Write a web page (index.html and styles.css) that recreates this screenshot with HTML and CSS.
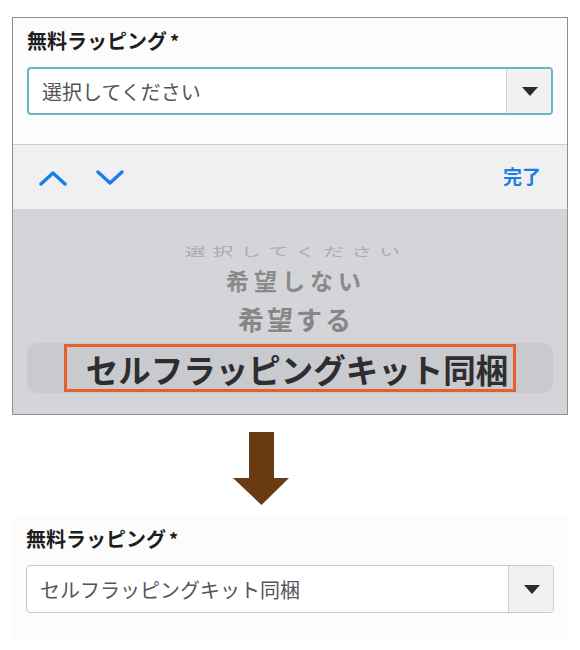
FILE: index.html
```html
<!DOCTYPE html>
<html lang="ja">
<head>
  <meta charset="UTF-8">
  <meta name="viewport" content="width=device-width, initial-scale=1.0">
  <title>無料ラッピング</title>
  <link rel="stylesheet" href="styles.css">
</head>
<body>
  <div class="phone">
    <div class="field">
      <div class="field-label">無料ラッピング<span class="req">*</span></div>
      <div class="select active">
        <span class="select-text">選択してください</span>
        <span class="select-btn"><span class="caret"></span></span>
      </div>
    </div>

    <div class="toolbar">
      <div class="nav">
        <svg class="chev" width="28" height="16" viewBox="0 0 28 16"><path d="M2 14 L14 3 L26 14" fill="none" stroke="#1a7ee6" stroke-width="3.4" stroke-linecap="round" stroke-linejoin="round"/></svg>
        <svg class="chev" width="28" height="16" viewBox="0 0 28 16"><path d="M2 2 L14 13 L26 2" fill="none" stroke="#1a7ee6" stroke-width="3.4" stroke-linecap="round" stroke-linejoin="round"/></svg>
      </div>
      <div class="done">完了</div>
    </div>

    <div class="picker">
      <div class="opt opt-far">選択してください</div>
      <div class="opt opt-mid">希望しない</div>
      <div class="opt opt-near">希望する</div>
      <div class="band">
        <span class="opt-sel">セルフラッピングキット同梱</span>
      </div>
    </div>
  </div>

  <div class="arrow">
    <svg width="56" height="74" viewBox="0 0 56 74"><path d="M16 0 H41 V46 H56 L28.5 73 L0 46 H16 Z" fill="#6a3a12"/></svg>
  </div>

  <div class="result">
    <div class="field-label">無料ラッピング<span class="req">*</span></div>
    <div class="select">
      <span class="select-text">セルフラッピングキット同梱</span>
      <span class="select-btn"><span class="caret"></span></span>
    </div>
  </div>
</body>
</html>
```

FILE: styles.css
```css
body{
  margin: 0;
  background-color: #fff;
  font-family: "Noto Sans CJK JP", "Noto Sans", sans-serif;
  color: #222;
}

.phone {
  margin: 17px 12px 0;
  border: 1px solid #8e8e8e;
  background-color: #fcfcfc;
}

.field {
  padding: 10px 14px 29px;
}

.field-label {
  font-size: 20px;
  font-weight: bold;
  line-height: 26px;
  margin-bottom: 13px;
  color: #1e1e1e;
}

.req {
  margin-left: 3px;
  font-size: 18px;
}

.select {
  display: flex;
  height: 48px;
  box-sizing: border-box;
  border: 1px solid #c9c9c9;
  border-radius: 4px;
  background-color: #fff;
  overflow: hidden;
}

.select.active {
  border: 2px solid #69b5c6;
}

.select-text {
  flex: 1;
  display: flex;
  align-items: center;
  padding-left: 13px;
  font-size: 20px;
  color: #555;
}

.select-btn {
  width: 44px;
  display: flex;
  align-items: center;
  justify-content: center;
  border-left: 1px solid #cfcfcf;
  background-color: #f1f1f1;
}

.caret {
  width: 0;
  height: 0;
  margin-left: 1px;
  border-left: 8px solid transparent;
  border-right: 8px solid transparent;
  border-top: 9px solid #2b2b2b;
}

.toolbar {
  height: 64px;
  display: flex;
  align-items: center;
  justify-content: space-between;
  padding: 0 26px 0 26px;
  border-top: 1px solid #cdcdcd;
  background-color: #f0f0f0;
}

.nav {
  display: flex;
  gap: 29px;
  margin-top: 2px;
}

.done {
  color: #1a7ee6;
  font-size: 19px;
  font-weight: bold;
  margin-bottom: 4px;
}

.picker {
  height: 205px;
  background-color: #d3d5d9;
  display: flex;
  flex-direction: column;
  align-items: center;
  overflow: hidden;
}

.opt {
  text-align: center;
  font-weight: bold;
  white-space: nowrap;
  margin-left: 12px;
}

.opt-far {
  margin-top: 30px;
  font-size: 21px;
  font-weight: normal;
  letter-spacing: 7px;
  color: #ababab;
  transform: scaleY(0.55);
  line-height: 24px;
}

.opt-mid {
  margin-top: 3px;
  font-size: 23px;
  letter-spacing: 5px;
  color: #8a8a8a;
  line-height: 28px;
}

.opt-near {
  margin-top: 10px;
  font-size: 26px;
  letter-spacing: 3px;
  color: #868686;
  line-height: 30px;
}

.band {
  align-self: stretch;
  margin: 9px 14px 0;
  height: 50px;
  border-radius: 10px;
  background-color: #c8cace;
  display: flex;
  justify-content: center;
  align-items: center;
}

.opt-sel {
  border: 3px solid #e65f2a;
  padding: 0 5px 0 19px;
  height: 48px;
  box-sizing: border-box;
  display: flex;
  align-items: center;
  font-size: 32.5px;
  font-weight: bold;
  color: #2e2e30;
}

.arrow {
  display: flex;
  justify-content: center;
  padding-top: 17px;
  padding-right: 58px;
}

.result {
  margin: 10px 12px 0;
  padding: 10px 14px 28px;
  background-color: #fcfcfc;
}
```
